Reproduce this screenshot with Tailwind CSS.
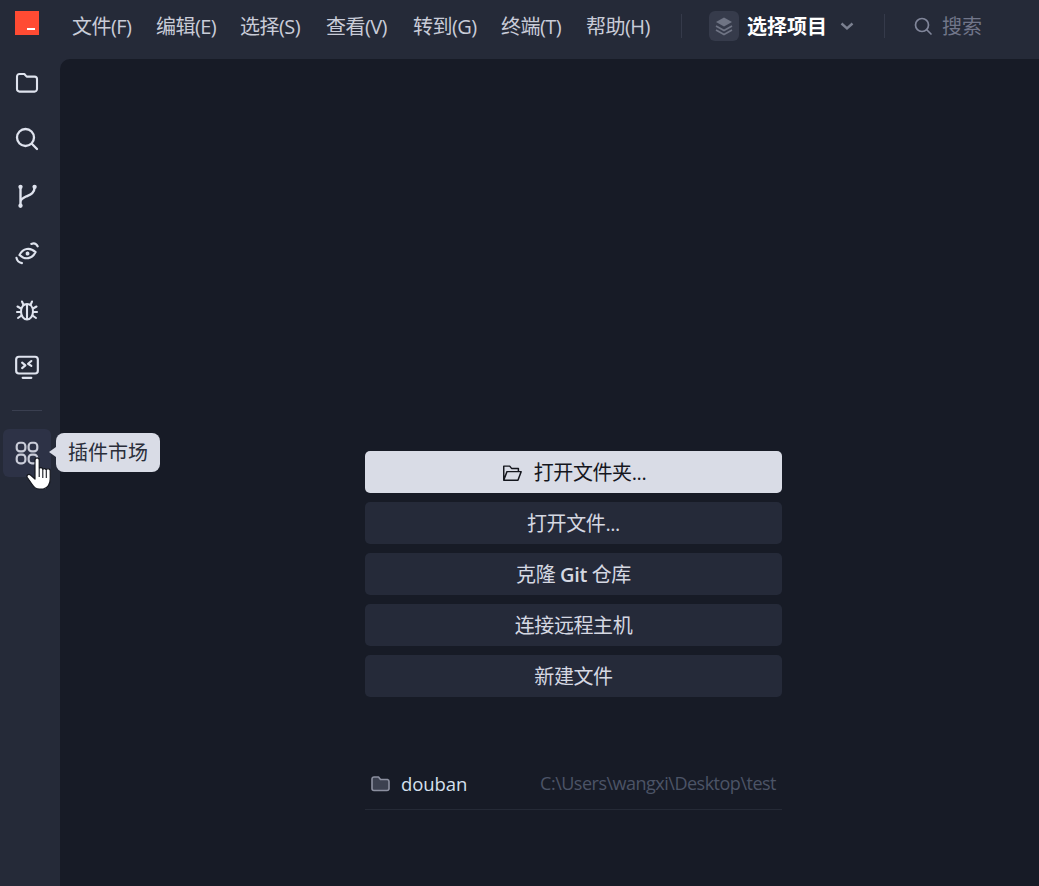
<!DOCTYPE html>
<html lang="en">

<head>
    <meta charset="UTF-8">
    <title>选择项目</title>
    <script src="https://cdn.jsdelivr.net/npm/@tailwindcss/browser@4"></script>
</head>

<body class="bg-[#252a38] w-[1039px] h-[886px] overflow-hidden font-['Open_Sans','Noto_Sans_CJK_SC',sans-serif] text-[20px] text-[#c9ccd8]">
    <!-- top bar -->
    <header class="h-[59px] flex items-center">
        <div class="w-[24px] h-[24px] ml-[15px] mb-[7px] mt-[-6px] bg-[#ff4b33] relative flex items-end justify-center">
            <div class="w-[8px] h-[2px] bg-white ml-[7px] mb-[5px]"></div>
        </div>
        <nav class="flex ml-[33px] mb-[5px] tracking-[-0.55px]">
            <div class="w-[84px]">文件(F)</div>
            <div class="w-[84px]">编辑(E)</div>
            <div class="w-[86px]">选择(S)</div>
            <div class="w-[87px]">查看(V)</div>
            <div class="w-[88px]">转到(G)</div>
            <div class="w-[85px]">终端(T)</div>
            <div class="w-[95px]">帮助(H)</div>
        </nav>
        <div class="w-px h-[24px] bg-[#353a4a] mb-[7px]"></div>
        <div class="w-[30px] h-[30px] ml-[27px] mb-[7px] rounded-[6px] bg-[#363b4b] flex items-center justify-center">
            <svg width="24" height="24" viewBox="0 0 24 24" fill="none">
                <path d="M12 3.500 20 8l-8 4.500L4 8z" fill="#6f7484"/>
                <path d="M4 12l8 4.500 8-4.500M4 16l8 4.500 8-4.500" stroke="#6f7484" stroke-width="1.700"/>
            </svg>
        </div>
        <div class="ml-[8px] mb-[5px] font-semibold text-white">选择项目</div>
        <svg class="ml-[12px] mb-[7px]" width="16" height="16" viewBox="0 0 16 16" fill="none">
            <path d="M2.500 5.500l5.500 5 5.500-5" stroke="#7b8090" stroke-width="2.400"/>
        </svg>
        <div class="w-px h-[24px] bg-[#353a4a] ml-[29px] mb-[7px]"></div>
        <svg class="ml-[28px] mb-[7px]" width="20" height="20" viewBox="0 0 20 20" fill="none">
            <circle cx="9" cy="9" r="6.500" stroke="#81869a" stroke-width="1.700"/>
            <path d="M14 14l4 4" stroke="#81869a" stroke-width="1.700" stroke-linecap="round"/>
        </svg>
        <div class="ml-[9px] mb-[5px] text-[#71768a]">搜索</div>
    </header>

    <div class="flex h-[827px]">
        <!-- activity bar -->
        <aside class="w-[60px] relative flex flex-col items-center pt-[10px] pr-[6px] text-[#dfe3ee]">
            <div class="h-[57px] w-full flex items-start justify-center pt-[2px]">
                <svg width="24" height="24" viewBox="0 0 24 24" fill="none" stroke="currentColor" stroke-width="2.100" stroke-linejoin="round">
                    <path d="M4.500 3h4.800l2.400 2.600h7.800a2.500 2.500 0 0 1 2.500 2.500v10a2.500 2.500 0 0 1-2.500 2.500H4.500A2.500 2.500 0 0 1 2 18V5.500A2.500 2.500 0 0 1 4.500 3z"/>
                </svg>
            </div>
            <div class="h-[57px] w-full flex items-start justify-center pt-[1px]">
                <svg width="24" height="24" viewBox="0 0 24 24" fill="none" stroke="currentColor" stroke-width="2.300" stroke-linecap="round">
                    <circle cx="10.500" cy="10.500" r="8.500"/>
                    <path d="M16.800 16.800l5.200 5.200"/>
                </svg>
            </div>
            <div class="h-[57px] w-full flex items-start justify-center">
                <svg width="26" height="26" viewBox="0 0 24 24" fill="none" stroke="currentColor" stroke-width="2.200" stroke-linecap="round">
                    <path d="M6 4v17M19 4c0 6-5 7-8 8.500-3 1.500-5 3-5 5"/>
                    <circle cx="6" cy="3.500" r="2" fill="currentColor" stroke="none"/>
                    <circle cx="19" cy="3.500" r="2" fill="currentColor" stroke="none"/>
                    <circle cx="6" cy="21" r="2" fill="currentColor" stroke="none"/>
                </svg>
            </div>
            <div class="h-[57px] w-full flex items-start justify-center">
                <svg width="26" height="26" viewBox="0 0 24 24" fill="none" stroke="currentColor" stroke-width="2" stroke-linecap="round">
                    <g transform="rotate(-10 12.500 12.500)">
                        <path d="M5 12.500c2.200-3 4.700-4.300 7.500-4.300s5.300 1.300 7.500 4.300c-2.200 3-4.700 4.300-7.500 4.300S7.200 15.500 5 12.500z"/>
                        <circle cx="12.500" cy="12.500" r="1.800" fill="currentColor" stroke="none"/>
                    </g>
                    <path d="M16 3.600c2.300-1 4.500-.4 5.800 2.200M2.300 16.500c.4 2.500 2.200 4.300 5 4.800"/>
                </svg>
            </div>
            <div class="h-[57px] w-full flex items-start justify-center pt-[1px]">
                <svg width="24" height="24" viewBox="0 0 24 24" fill="none" stroke="currentColor" stroke-width="2.100" stroke-linecap="round" stroke-linejoin="round">
                    <path d="M12 6c3.500 0 6 3 6 7.500S15.500 21.500 12 21.500 6 18 6 13.500 8.500 6 12 6zM12 6v15.500"/>
                    <path d="M8.500 7 7 3.500M15.500 7 17 3.500M6 10.500 2.500 8.500M18 10.500l3.500-2M6 14H2M18 14h4M6.500 17.500 3 20M17.500 17.500 21 20"/>
                </svg>
            </div>
            <div class="h-[57px] w-full flex items-start justify-center">
                <svg width="26" height="26" viewBox="0 0 24 24" fill="none" stroke="currentColor" stroke-width="2" stroke-linecap="round" stroke-linejoin="round">
                    <rect x="2" y="2.500" width="20" height="15.500" rx="2.500"/>
                    <path d="M8 22h8M7.500 8l3 2.500-3 2.500M16 6.500 13 9l3 2"/>
                </svg>
            </div>
            <div class="w-[30px] h-px bg-[#3a3f50] mt-[-1px]"></div>
            <div class="absolute left-[3px] top-[370px] w-[48px] h-[48px] rounded-[6px] bg-[#30354a]/80 flex items-center justify-center text-[#c9ccd8]">
                <svg width="26" height="26" viewBox="0 0 24 24" fill="none" stroke="currentColor" stroke-width="2">
                    <rect x="2.500" y="2.500" width="8" height="8" rx="3"/>
                    <rect x="13.500" y="2.500" width="8" height="8" rx="3"/>
                    <rect x="2.500" y="13.500" width="8" height="8" rx="3"/>
                    <rect x="13.500" y="13.500" width="8" height="8" rx="3"/>
                </svg>
            </div>
            <!-- tooltip -->
            <div class="absolute z-10 left-[56px] top-[374px] w-[104px] h-[39px] rounded-[8px] bg-[#d9dce6] text-[#2a2e3a] text-[20px] flex items-center justify-center">
                插件市场
                <div class="absolute left-[-7px] top-[14px] w-0 h-0 border-y-[5px] border-y-transparent border-r-[7px] border-r-[#d9dce6]"></div>
            </div>
            <!-- hand cursor -->
            <svg class="absolute z-20 left-[26px] top-[398px]" width="26" height="33" viewBox="0 0 26 33">
                <path d="M9 3a2.100 2.100 0 0 1 4.200 0v8.500a2 2 0 0 1 3.600.8 2 2 0 0 1 3.500.9 2 2 0 0 1 3.900.8v8c0 5-2.500 9.500-7 10h-4c-3.500 0-5.500-2-7-4.500L1.300 20.500c-1.300-2.300 1.500-4 3.200-2.500L9 22z" fill="#fff" stroke="#15171e" stroke-width="1.200" stroke-linejoin="round"/>
                <path d="M13.200 12v8M16.800 12.500V21M20.300 13.500V21" stroke="#15171e" stroke-width="1.100"/>
            </svg>
        </aside>

        <!-- editor welcome -->
        <main class="flex-1 bg-[#171b26] rounded-tl-[10px] pl-[305px] pt-[392px] text-[#d5d8e2]">
            <div class="w-[417px] flex flex-col gap-[9px]">
                <button class="h-[42px] pt-[1px] rounded-[5px] bg-[#d9dce6] text-[#14161d] flex items-center justify-center gap-[11px] tracking-[-0.4px]">
                    <svg width="22" height="22" viewBox="0 0 24 24" fill="none" stroke="currentColor" stroke-width="1.600" stroke-linejoin="round">
                        <path d="M3 20V4.500h6.500l2 2.500H19v3.500M3 20l3.500-9.500H22L18.500 20z"/>
                    </svg>
                    打开文件夹...
                </button>
                <button class="h-[42px] pt-[1px] rounded-[5px] bg-[#252a39] tracking-[-0.4px]">打开文件...</button>
                <button class="h-[42px] pt-[1px] rounded-[5px] bg-[#252a39] tracking-[-0.4px]">克隆 <span class="font-semibold">Git</span> 仓库</button>
                <button class="h-[42px] pt-[1px] rounded-[5px] bg-[#252a39] tracking-[-0.4px]">连接远程主机</button>
                <button class="h-[42px] pt-[1px] rounded-[5px] bg-[#252a39] tracking-[-0.4px]">新建文件</button>
            </div>
            <div class="w-[417px] h-[50px] mt-[63px] border-b border-[#252a36] flex items-center pl-[6px] pb-[1px]">
                <svg width="20" height="20" viewBox="0 0 20 20" fill="#3c4150" stroke="#8c90a0" stroke-width="1.600" stroke-linejoin="round">
                    <path d="M3.500 3h4l2 2.500h7a2 2 0 0 1 1.500 2v7.500a2 2 0 0 1-2 1.500H3a2 2 0 0 1-2-2V5a2 2 0 0 1 2.500-2z"/>
                </svg>
                <span class="ml-[10px] text-[18.500px] text-[#d5e0ee] tracking-[-0.1px]">douban</span>
                <span class="ml-auto mr-[6px] mb-[2px] text-[18px] text-[#4c5466] tracking-[-0.5px]">C:\Users\wangxi\Desktop\test</span>
            </div>
        </main>
    </div>
</body>
</html>
